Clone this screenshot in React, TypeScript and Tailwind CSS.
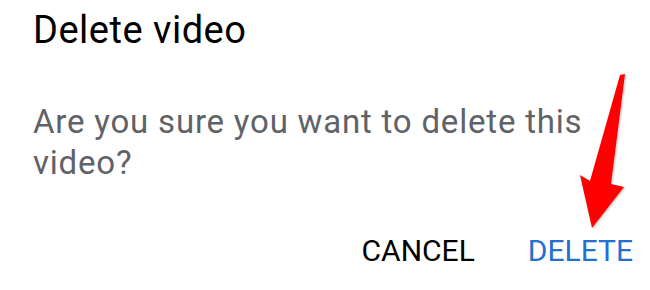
import React from 'react';

const RedArrow = () => (
  <svg
    className="absolute left-0 top-0 pointer-events-none"
    width="650"
    height="290"
    viewBox="0 0 650 290"
  >
    <defs>
      <filter id="arrowShadow" x="-20%" y="-20%" width="140%" height="140%">
        <feDropShadow dx="1" dy="1" stdDeviation="1" floodColor="#000" floodOpacity="0.25" />
      </filter>
    </defs>
    <polygon
      points="620,75 625,74 611,184 624,187 592,228 580,175 590,181"
      fill="#ff0000"
      filter="url(#arrowShadow)"
    />
  </svg>
);

export default function App() {
  return (
    <div className="relative w-[650px] h-[290px] bg-white overflow-hidden font-['Roboto',sans-serif]">
      <div className="flex flex-col h-full">
        <h2 className="pl-[33px] pt-[8px] text-[38px] leading-[44px] tracking-[0.5px] text-black font-normal">
          Delete video
        </h2>
        <p className="pl-[33px] pr-[50px] mt-[49px] text-[33px] leading-[41px] tracking-[0.8px] text-[#5f6368]">
          Are you sure you want to delete this video?
        </p>
        <div className="flex justify-end items-center gap-[53px] pr-[17px] mt-[50px]">
          <button className="text-[30px] leading-[36px] text-black uppercase">Cancel</button>
          <button className="text-[30px] leading-[36px] text-[#2270d0] uppercase">Delete</button>
        </div>
      </div>
      <RedArrow />
    </div>
  );
}
